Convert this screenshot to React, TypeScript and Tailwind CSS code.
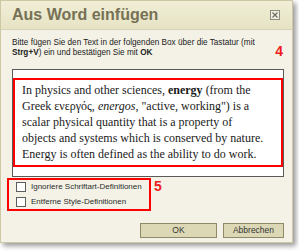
import React from "react";

function CloseBox() {
  return (
    <span className="grid h-[10px] w-[10px] place-items-center border border-[#8d8b7c] bg-[#f1efe2]">
      <svg width="6" height="6" viewBox="0 0 6 6">
        <path d="M0.5 0.5 L5.5 5.5 M5.5 0.5 L0.5 5.5" stroke="#6f6d62" strokeWidth="1.2" />
      </svg>
    </span>
  );
}

function Check({ label }: { label: string }) {
  return (
    <label className="flex items-center gap-[5px]">
      <span className="h-[10px] w-[10px] border border-[#5d5d5d] bg-white" />
      <span className="text-[8px] leading-[10px] text-[#2c2c2c]">{label}</span>
    </label>
  );
}

export default function App() {
  return (
    <div className="h-[251px] w-[299px] overflow-hidden bg-white font-['Liberation_Sans',Arial,sans-serif]">
      <div className="flex h-[243px] w-[293px] flex-col border border-[#cdc8a3] bg-[#f4f2e6] shadow-[3px_3px_5px_rgba(0,0,0,0.4)]">
        <div className="flex h-[29px] shrink-0 items-center justify-between border-b border-[#d6d2b4] bg-gradient-to-b from-[#f0eed6] to-[#e6e3c4] pl-[11px] pr-[12px]">
          <span className="text-[16px] font-bold text-[#767155]">Aus Word einfügen</span>
          <CloseBox />
        </div>

        <div className="flex flex-1 flex-col pt-[8px]">
          <div className="flex items-start justify-between pl-[11px] pr-[9px]">
            <p className="w-[252px] text-[8.2px] leading-[9.5px] text-[#222]">
              Bitte fügen Sie den Text in der folgenden Box über die Tastatur (mit
              <br />
              <b>Strg+V</b>) ein und bestätigen Sie mit <b>OK</b>
            </p>
            <span className="mt-[6px] text-[14px] font-bold leading-none text-[#ee1c1c]">4</span>
          </div>

          <div className="ml-[11px] mt-[11px] h-[108px] w-[272px] border border-[#5a5a5a] bg-white pb-[9px] pt-[8px]">
            <div className="h-[89px] border-2 border-[#ff0000] px-[7px] pt-[2px] font-['Liberation_Serif','Times_New_Roman',serif] text-[12px] leading-[16px] text-[#1a1a1a]">
              In physics and other sciences, <b>energy</b> (from the
              <br />
              Greek ενεργός, <i>energos</i>, "active, working") is a
              <br />
              scalar physical quantity that is a property of
              <br />
              objects and systems which is conserved by nature.
              <br />
              Energy is often defined as the ability to do work.
            </div>
          </div>

          <div className="mt-[1px] flex items-start">
            <div className="ml-[6px] flex w-[144px] flex-col gap-[5px] border-2 border-[#ff0000] pb-[2px] pl-[7px] pt-[2px]">
              <Check label="Ignoriere Schriftart-Definitionen" />
              <Check label="Entferne Style-Definitionen" />
            </div>
            <span className="ml-[3px] mt-[1px] text-[14px] font-bold leading-none text-[#ee1c1c]">5</span>
          </div>

          <div className="mt-auto flex justify-end gap-[6px] pb-[4px] pr-[8px]">
            <button className="h-[15px] w-[77px] border border-[#8e8a68] bg-[#dcd8b6] text-[8.5px] leading-none text-[#333]">
              OK
            </button>
            <button className="h-[15px] w-[61px] border border-[#8e8a68] bg-[#dcd8b6] text-[8.5px] leading-none text-[#333]">
              Abbrechen
            </button>
          </div>
        </div>
      </div>
    </div>
  );
}
